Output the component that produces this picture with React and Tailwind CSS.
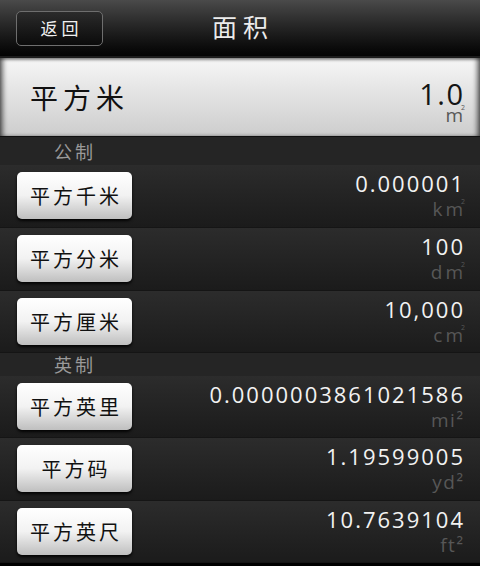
import React from "react";

const cjk = { fontFamily: '"Noto Sans CJK SC", "Noto Sans", sans-serif' };
const lat = { fontFamily: '"Open Sans", "Noto Sans CJK SC", sans-serif' };

function Unit({ base, sup, plain }) {
  if (plain) {
    return (
      <div className="text-[19px] leading-[22px] tracking-[1.5px] text-[#575757] mr-[-1.5px]" style={lat}>
        {plain}
      </div>
    );
  }
  const head = base.slice(0, -1);
  const last = base.slice(-1);
  return (
    <div className="text-[19px] leading-[22px] text-[#575757]" style={lat}>
      <span className="tracking-[3px]">{head}</span>
      <span className="relative">
        {last}
        <span className="absolute right-[-2px] top-[2px] text-[7px] leading-[7px]">{sup}</span>
      </span>
    </div>
  );
}

function Row({ label, value, unit, h }) {
  return (
    <div
      className={`${h} flex items-start justify-between bg-linear-to-b from-[#2c2c2c] to-[#1b1b1b] border-b border-[#151515]`}
    >
      <div className="ml-[17px] mt-[7px] w-[115px] h-[47px] rounded-[5px] bg-linear-to-b from-white via-[#f2f2f2] to-[#bfbfbf] shadow-[0_2px_3px_rgba(0,0,0,0.9)] flex items-center justify-center">
        <span className="text-[20px] tracking-[3px] pl-[3px] text-[#111]" style={cjk}>
          {label}
        </span>
      </div>
      <div className="mr-[17px] pt-[5px] flex flex-col items-end">
        <div className="text-[22px] leading-[27px] font-medium tracking-[2px] mr-[-2px] text-[#f2f2f2]" style={lat}>
          {value}
        </div>
        <div className="mt-[1px]">{unit}</div>
      </div>
    </div>
  );
}

function Section({ title, h }) {
  return (
    <div className={`${h} bg-[#252525] flex items-center pl-[54px]`}>
      <span className="text-[18px] tracking-[3px] text-[#9a9a9a]" style={cjk}>
        {title}
      </span>
    </div>
  );
}

export default function App() {
  return (
    <div className="w-[480px] h-[566px] bg-black overflow-hidden flex flex-col">
      <div className="h-[56px] shrink-0 bg-linear-to-b from-[#4a4a4a] to-[#040404] grid grid-cols-[1fr_auto_1fr] items-center">
        <div className="pl-[16px]">
          <div className="w-[87px] h-[35px] rounded-[5px] border border-[#6e6e6e] bg-linear-to-b from-[#2b2b2b] to-[#0b0b0b] flex items-center justify-center">
            <span className="text-[17px] tracking-[4px] pl-[4px] text-[#f0f0f0]" style={cjk}>
              返回
            </span>
          </div>
        </div>
        <div className="text-[25px] tracking-[6px] pl-[6px] text-[#ececec] pb-[2px]" style={cjk}>
          面积
        </div>
        <div />
      </div>
      <div className="h-[2px] shrink-0 bg-[#1c1c1c]" />
      <div className="h-[78px] shrink-0 bg-linear-to-b from-[#f6f6f6] to-[#cdcdcd] shadow-[inset_5px_0_5px_-2px_rgba(0,0,0,0.55),inset_-5px_0_5px_-2px_rgba(0,0,0,0.55),inset_0_2px_3px_rgba(0,0,0,0.35)] flex items-center justify-between">
        <span className="pl-[30px] text-[28px] tracking-[5px] text-[#111]" style={cjk}>
          平方米
        </span>
        <div className="mr-[17px] pt-[22px] self-start flex flex-col items-end">
          <div className="text-[29px] leading-[28px] font-medium tracking-[1.5px] mr-[-1.5px] text-[#151515]" style={lat}>
            1.0
          </div>
          <div className="mt-[-4px]">
            <Unit base="m" sup="2" />
          </div>
        </div>
      </div>
      <div className="h-[1px] shrink-0 bg-[#111]" />
      <Section title="公制" h="h-[28px] shrink-0" />
      <Row h="h-[63px] shrink-0" label="平方千米" value="0.000001" unit={<Unit base="km" sup="2" />} />
      <Row h="h-[63px] shrink-0" label="平方分米" value="100" unit={<Unit base="dm" sup="2" />} />
      <Row h="h-[62px] shrink-0" label="平方厘米" value="10,000" unit={<Unit base="cm" sup="2" />} />
      <Section title="英制" h="h-[23px] shrink-0" />
      <Row h="h-[62px] shrink-0" label="平方英里" value="0.0000003861021586" unit={<Unit plain="mi²" />} />
      <Row h="h-[63px] shrink-0" label="平方码" value="1.19599005" unit={<Unit plain="yd²" />} />
      <Row h="h-[62px] shrink-0" label="平方英尺" value="10.7639104" unit={<Unit plain="ft²" />} />
      <div className="flex-1 bg-black" />
    </div>
  );
}
